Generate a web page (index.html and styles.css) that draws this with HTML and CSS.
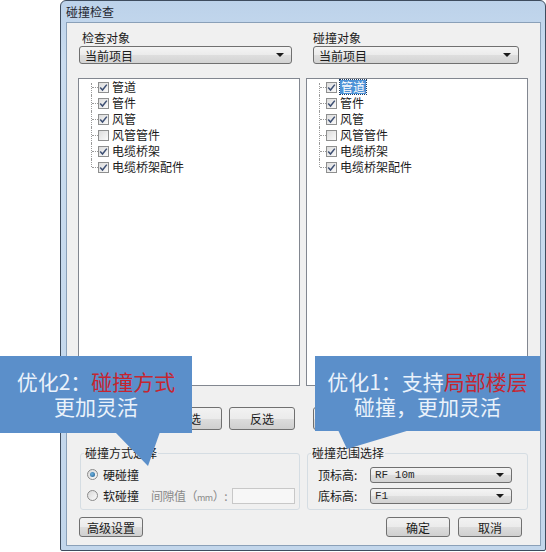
FILE: index.html
```html
<!DOCTYPE html>
<html lang="zh-CN">
<head>
    <meta charset="UTF-8">
    <title>碰撞检查</title>
    <link rel="stylesheet" href="styles.css">
</head>
<body>
    <div class="window">
        <div class="titlebar">碰撞检查</div>
        <div class="client">
            <div class="columns">
                <!-- colonne gauche : objets à vérifier -->
                <div class="col col-left">
                    <div class="field-label">检查对象</div>
                    <div class="select">当前项目<span class="arrow"></span></div>
                    <div class="tree-list">
                        <ul class="tree">
                            <li><span class="check on"><svg width="9" height="9" viewBox="0 0 9 9"><path d="M1.2 4.6 L3.5 7 L7.8 1.6" fill="none" stroke="#3d4f73" stroke-width="1.5"/></svg></span><span class="item">管道</span></li>
                            <li><span class="check on"><svg width="9" height="9" viewBox="0 0 9 9"><path d="M1.2 4.6 L3.5 7 L7.8 1.6" fill="none" stroke="#3d4f73" stroke-width="1.5"/></svg></span><span class="item">管件</span></li>
                            <li><span class="check on"><svg width="9" height="9" viewBox="0 0 9 9"><path d="M1.2 4.6 L3.5 7 L7.8 1.6" fill="none" stroke="#3d4f73" stroke-width="1.5"/></svg></span><span class="item">风管</span></li>
                            <li><span class="check"></span><span class="item">风管管件</span></li>
                            <li><span class="check on"><svg width="9" height="9" viewBox="0 0 9 9"><path d="M1.2 4.6 L3.5 7 L7.8 1.6" fill="none" stroke="#3d4f73" stroke-width="1.5"/></svg></span><span class="item">电缆桥架</span></li>
                            <li><span class="check on"><svg width="9" height="9" viewBox="0 0 9 9"><path d="M1.2 4.6 L3.5 7 L7.8 1.6" fill="none" stroke="#3d4f73" stroke-width="1.5"/></svg></span><span class="item">电缆桥架配件</span></li>
                        </ul>
                    </div>
                    <div class="btn-row">
                        <button class="btn">全选</button>
                        <button class="btn">反选</button>
                    </div>
                    <fieldset class="group">
                        <legend>碰撞方式选择</legend>
                        <div class="group-row">
                            <span class="radio checked"></span><span class="radio-text">硬碰撞</span>
                        </div>
                        <div class="group-row">
                            <span class="radio"></span><span class="radio-text">软碰撞</span>
                            <span class="gap-label">间隙值（<small>mm</small>）:</span>
                            <span class="gap-input"></span>
                        </div>
                    </fieldset>
                </div>

                <!-- colonne droite : objets de collision -->
                <div class="col col-right">
                    <div class="field-label">碰撞对象</div>
                    <div class="select">当前项目<span class="arrow"></span></div>
                    <div class="tree-list">
                        <ul class="tree">
                            <li><span class="check on"><svg width="9" height="9" viewBox="0 0 9 9"><path d="M1.2 4.6 L3.5 7 L7.8 1.6" fill="none" stroke="#3d4f73" stroke-width="1.5"/></svg></span><span class="item selected">管道</span></li>
                            <li><span class="check on"><svg width="9" height="9" viewBox="0 0 9 9"><path d="M1.2 4.6 L3.5 7 L7.8 1.6" fill="none" stroke="#3d4f73" stroke-width="1.5"/></svg></span><span class="item">管件</span></li>
                            <li><span class="check on"><svg width="9" height="9" viewBox="0 0 9 9"><path d="M1.2 4.6 L3.5 7 L7.8 1.6" fill="none" stroke="#3d4f73" stroke-width="1.5"/></svg></span><span class="item">风管</span></li>
                            <li><span class="check"></span><span class="item">风管管件</span></li>
                            <li><span class="check on"><svg width="9" height="9" viewBox="0 0 9 9"><path d="M1.2 4.6 L3.5 7 L7.8 1.6" fill="none" stroke="#3d4f73" stroke-width="1.5"/></svg></span><span class="item">电缆桥架</span></li>
                            <li><span class="check on"><svg width="9" height="9" viewBox="0 0 9 9"><path d="M1.2 4.6 L3.5 7 L7.8 1.6" fill="none" stroke="#3d4f73" stroke-width="1.5"/></svg></span><span class="item">电缆桥架配件</span></li>
                        </ul>
                    </div>
                    <div class="btn-row">
                        <button class="btn">全选</button>
                        <button class="btn">反选</button>
                    </div>
                    <fieldset class="group">
                        <legend>碰撞范围选择</legend>
                        <div class="group-row">
                            <span class="level-label">顶标高:</span>
                            <span class="select small">RF 10m<span class="arrow"></span></span>
                        </div>
                        <div class="group-row">
                            <span class="level-label">底标高:</span>
                            <span class="select small">F1<span class="arrow"></span></span>
                        </div>
                    </fieldset>
                </div>
            </div>

            <div class="footer">
                <button class="btn btn-small">高级设置</button>
                <div class="footer-right">
                    <button class="btn btn-small">确定</button>
                    <button class="btn btn-small">取消</button>
                </div>
            </div>
        </div>
    </div>

    <!-- bulles d'annotation -->
    <div class="callout callout-left">
        优化2：<span class="hl">碰撞方式</span><br>更加灵活
        <svg class="tail tail-left" width="50" height="35" viewBox="0 0 50 35"><polygon points="3,0 48,0 36,34" fill="#5b8fca"/></svg>
    </div>
    <div class="callout callout-right">
        优化1：支持<span class="hl">局部楼层</span><br>碰撞，更加灵活
        <svg class="tail tail-right" width="80" height="22" viewBox="0 0 80 22"><polygon points="3,0 75,0 12,19" fill="#5b8fca"/></svg>
    </div>
</body>
</html>
```

FILE: styles.css
```css
/* Styles généraux */
* {
    margin: 0;
    padding: 0;
    box-sizing: border-box;
}

body {
    width: 546px;
    height: 552px;
    background: #fff;
    font-family: "Noto Sans CJK SC", sans-serif;
    font-size: 12px;
    color: #1b1b1b;
    position: relative;
    overflow: hidden;
}

/* Fenêtre */
.window {
    margin-left: 60px;
    width: 486px;
    height: 551px;
    border: 1px solid #3e4c5e;
    border-radius: 6px 6px 2px 2px;
    background: linear-gradient(to bottom, #bcd2ea, #cadcef 60px, #c2d6eb);
    padding: 0 4px 4px 5px;
}

.titlebar {
    height: 21px;
    line-height: 21px;
    color: #1e2630;
}

.client {
    height: 524px;
    background: #f0f0f0;
    border: 1px solid #8aa0b8;
    padding: 0 12px 0 11px;
}

.columns {
    display: grid;
    grid-template-columns: 222px 222px;
    column-gap: 6px;
}

.col {
    display: flex;
    flex-direction: column;
}

.field-label {
    margin-top: 8px;
    line-height: 14px;
    padding-left: 4px;
}

.col-right .field-label {
    padding-left: 7px;
}

/* Listes déroulantes */
.select {
    position: relative;
    display: flex;
    align-items: center;
    height: 18px;
    margin-top: 1px;
    margin-left: 1px;
    width: 213px;
    padding-left: 5px;
    border: 1px solid #707070;
    border-radius: 3px;
    background: linear-gradient(to bottom, #f4f4f4 0%, #ebebeb 50%, #dedede 51%, #d3d3d3 100%);
}

.col-right > .select {
    margin-left: 7px;
    width: 206px;
}

.arrow {
    margin-left: auto;
    margin-right: 7px;
    width: 0;
    height: 0;
    border-left: 4px solid transparent;
    border-right: 4px solid transparent;
    border-top: 4px solid #1a1a1a;
}

.select.small {
    width: 142px;
    height: 16px;
    margin: 0;
    padding-left: 4px;
    font-family: "Liberation Mono", monospace;
    font-size: 11px;
    color: #2a2a2a;
}

/* Arborescence */
.tree-list {
    margin-top: 14px;
    height: 308px;
    border: 1px solid #828790;
    background: #fff;
}

.tree {
    list-style: none;
}

.tree li {
    position: relative;
    display: flex;
    align-items: center;
    height: 16px;
    padding-left: 19px;
}

.tree li::before {
    content: "";
    position: absolute;
    left: 12px;
    top: 0;
    bottom: 0;
    border-left: 1px dotted #9a9a9a;
}

.tree li:first-child::before {
    top: 4px;
}

.tree li:last-child::before {
    bottom: 50%;
}

.tree li::after {
    content: "";
    position: absolute;
    left: 13px;
    top: 50%;
    width: 6px;
    border-top: 1px dotted #9a9a9a;
}

.check {
    display: flex;
    justify-content: center;
    align-items: center;
    width: 11px;
    height: 11px;
    border: 1px solid #8e8f8f;
    background: linear-gradient(135deg, #dcdcdc, #fafafa);
}

.item {
    margin-left: 3px;
    line-height: 14px;
}

.item.selected {
    background: #4d92d6;
    color: #fff;
    outline: 1px dotted #1d3d66;
    padding: 0 1px;
}

/* Boutons */
.btn-row {
    display: flex;
    gap: 7px;
    margin-top: 21px;
}

.col-left .btn-row {
    justify-content: flex-end;
    padding-right: 5px;
}

.col-right .btn-row {
    padding-left: 7px;
}

.btn {
    width: 66px;
    height: 23px;
    border: 1px solid #707070;
    border-radius: 3px;
    background: linear-gradient(to bottom, #f2f2f2 0%, #ebebeb 50%, #dddddd 51%, #cfcfcf 100%);
    font-family: inherit;
    font-size: 12px;
    color: #1b1b1b;
}

.btn-small {
    width: 64px;
    height: 20px;
}

/* Groupes */
.group {
    margin-top: 16px;
    margin-left: 2px;
    border: 1px solid #d5dde3;
    border-radius: 3px;
    padding: 4px 0 3px;
    min-width: 0;
}

.col-right .group {
    margin-left: 1px;
}

.group legend {
    line-height: 14px;
    margin-left: 3px;
    padding: 0 1px;
}

.group-row {
    display: flex;
    align-items: center;
    height: 21px;
    padding-left: 6px;
    white-space: nowrap;
}

.col-right .group-row {
    padding-left: 10px;
}

.radio {
    flex-shrink: 0;
    width: 11px;
    height: 11px;
    border: 1px solid #8a8a8a;
    border-radius: 50%;
    background: linear-gradient(135deg, #d8d8d8, #fbfbfb);
    display: flex;
    justify-content: center;
    align-items: center;
}

.radio.checked::after {
    content: "";
    width: 5px;
    height: 5px;
    border-radius: 50%;
    background: radial-gradient(circle at 40% 40%, #6fb3e0, #1e5a8c);
}

.radio-text {
    flex-shrink: 0;
    margin-left: 5px;
    width: 48px;
}

.gap-label {
    flex-shrink: 0;
    color: #8a8a8a;
    letter-spacing: -0.5px;
}

.gap-label small {
    font-size: 9px;
}

.gap-input {
    flex-shrink: 0;
    width: 63px;
    height: 16px;
    margin-left: 5px;
    border: 1px solid #c8c8c8;
    background: #f7f7f7;
}

.level-label {
    width: 52px;
}

/* Pied de fenêtre */
.footer {
    display: flex;
    margin-top: 7px;
    padding-left: 1px;
    padding-right: 6px;
}

.footer-right {
    margin-left: auto;
    display: flex;
    gap: 8px;
}

/* Bulles */
.callout {
    position: absolute;
    top: 356px;
    background: #5b8fca;
    color: #eaf2fb;
    font-size: 21px;
    line-height: 25px;
    text-align: center;
    padding-top: 13px;
}

.callout-left {
    left: 0;
    width: 192px;
    height: 77px;
}

.callout-right {
    left: 315px;
    width: 225px;
    height: 75px;
}

.hl {
    color: #c62530;
}

.tail {
    position: absolute;
}

.tail-left {
    left: 112px;
    top: 76px;
}

.tail-right {
    left: 20px;
    top: 74px;
}
```
